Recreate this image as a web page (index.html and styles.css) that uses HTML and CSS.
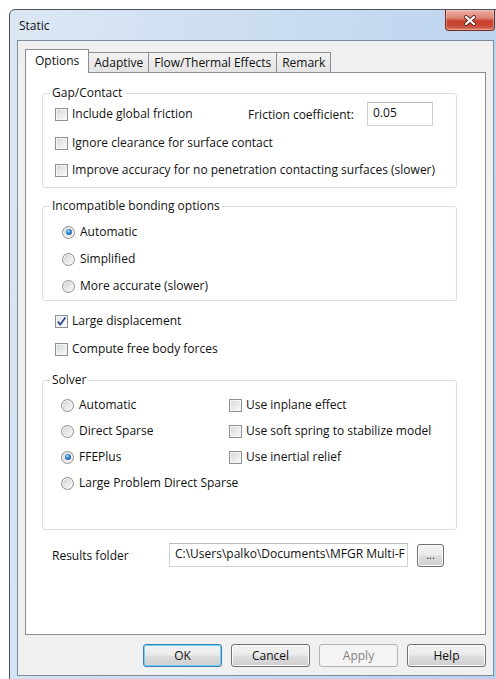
FILE: index.html
```html
<!DOCTYPE html>
<html lang="en">
<head>
<meta charset="utf-8">
<title>Static</title>
<link rel="stylesheet" href="styles.css">
</head>
<body>
<div class="window">
  <div class="titlebar">
    <span class="title">Static</span>
    <button class="close" type="button" aria-label="Close">
      <svg width="14" height="11" viewBox="0 0 14 11">
        <path d="M3 2 L11 9 M11 2 L3 9" stroke="#5b2a22" stroke-width="4" stroke-linecap="round" fill="none"/>
        <path d="M3 2 L11 9 M11 2 L3 9" stroke="#ffffff" stroke-width="2.2" stroke-linecap="round" fill="none"/>
      </svg>
    </button>
  </div>

  <div class="client">
    <div class="tabs">
      <div class="tab active">Options</div>
      <div class="tab">Adaptive</div>
      <div class="tab">Flow/Thermal Effects</div>
      <div class="tab">Remark</div>
    </div>

    <div class="page">
      <fieldset class="group group-gap">
        <legend>Gap/Contact</legend>
        <div class="row row-friction">
          <label class="check check-friction"><span class="box"></span>Include global friction</label>
          <span class="coef-label">Friction coefficient:</span>
          <span class="field coef">0.05</span>
        </div>
        <div class="row">
          <label class="check"><span class="box"></span>Ignore clearance for surface contact</label>
        </div>
        <div class="row">
          <label class="check"><span class="box"></span>Improve accuracy for no penetration contacting surfaces (slower)</label>
        </div>
      </fieldset>

      <fieldset class="group group-bond">
        <legend>Incompatible bonding options</legend>
        <div class="row"><label class="radio"><span class="dot on"></span>Automatic</label></div>
        <div class="row"><label class="radio"><span class="dot"></span>Simplified</label></div>
        <div class="row"><label class="radio"><span class="dot"></span>More accurate (slower)</label></div>
      </fieldset>

      <div class="loose">
        <div class="row">
          <label class="check"><span class="box on">
            <svg width="11" height="11" viewBox="0 0 11 11"><path d="M1.8 5.6 L4.3 8.6 L9.4 1.6" stroke="#2b4189" stroke-width="1.7" fill="none" stroke-linejoin="round"/></svg>
          </span>Large displacement</label>
        </div>
        <div class="row">
          <label class="check"><span class="box"></span>Compute free body forces</label>
        </div>
      </div>

      <fieldset class="group group-solver">
        <legend>Solver</legend>
        <div class="solver-grid">
          <label class="radio"><span class="dot"></span>Automatic</label>
          <label class="check"><span class="box"></span>Use inplane effect</label>
          <label class="radio"><span class="dot"></span>Direct Sparse</label>
          <label class="check"><span class="box"></span>Use soft spring to stabilize model</label>
          <label class="radio"><span class="dot on"></span>FFEPlus</label>
          <label class="check"><span class="box"></span>Use inertial relief</label>
          <label class="radio"><span class="dot"></span>Large Problem Direct Sparse</label>
        </div>
      </fieldset>

      <div class="results">
        <span class="results-label">Results folder</span>
        <span class="field path">C:\Users\palko\Documents\MFGR Multi-F</span>
        <button class="btn browse" type="button">...</button>
      </div>
    </div>

    <div class="actions">
      <button class="btn default" type="button">OK</button>
      <button class="btn" type="button">Cancel</button>
      <button class="btn" type="button" disabled>Apply</button>
      <button class="btn" type="button">Help</button>
    </div>
  </div>
</div>
</body>
</html>
```

FILE: styles.css
```css
* {
  box-sizing: border-box;
}

html,
body {
  margin: 0;
  padding: 0;
  background: #ffffff;
  overflow: hidden;
  height: 679px;
}

body {
  font-family: "Open Sans", "Noto Sans", "Liberation Sans", sans-serif;
  font-size: 12px;
  color: #111111;
}

/* ---- window frame ---- */
.window {
  margin: 9px 0 0 9px;
  width: 493px;
  border: 1px solid #4b5562;
  border-radius: 6px 6px 0 0;
  padding: 0 7px 7px 7px;
  background: linear-gradient(100deg, #dce7f3 0%, #cadcf1 45%, #b7d1ef 100%);
}

.titlebar {
  height: 30px;
  display: flex;
  align-items: flex-start;
  justify-content: space-between;
}

.title {
  margin: 8px 0 0 2px;
  line-height: 16px;
  color: #111111;
}

.close {
  width: 50px;
  height: 21px;
  margin: 0 -1px 0 0;
  padding: 0;
  border: 1px solid #7a2a1f;
  border-top: none;
  border-radius: 0 0 4px 4px;
  background: linear-gradient(#eab1a6 0%, #de8474 40%, #c8412d 55%, #c84a36 80%, #d9806f 100%);
  box-shadow: inset 0 0 0 1px rgba(255, 210, 200, 0.45);
  display: flex;
  align-items: center;
  justify-content: center;
}

/* ---- client area ---- */
.client {
  border: 1px solid #7f8c9b;
  background: #f0f0f0;
  padding: 8px 7px 8px 7px;
  display: flex;
  flex-direction: column;
}

.tabs {
  height: 23px;
  display: flex;
  align-items: flex-end;
}

.tab {
  height: 20px;
  padding: 0 5px;
  border: 1px solid #898c95;
  border-bottom: none;
  border-left: none;
  background: linear-gradient(#f3f3f3, #e3e3e3);
  line-height: 19px;
  white-space: nowrap;
}

.tab.active {
  position: relative;
  z-index: 1;
  height: 24px;
  margin-bottom: -1px;
  padding: 0 9px;
  border-left: 1px solid #898c95;
  background: #ffffff;
  line-height: 22px;
}

.page {
  height: 563px;
  border: 1px solid #898c95;
  background: #ffffff;
  display: flex;
  flex-direction: column;
  align-items: flex-start;
}

/* ---- group boxes ---- */
.group {
  margin: 0 0 0 16px;
  width: 415px;
  border: 1px solid #d5dfe5;
  border-radius: 3px;
  padding: 0;
  min-width: 0;
}

.group legend {
  margin-left: 7px;
  padding: 0 2px;
  line-height: 16px;
}

.group-gap {
  margin-top: 12px;
  padding: 1px 0 7px 0;
  display: flex;
  flex-direction: column;
  gap: 7px;
}

.group-gap > .row {
  margin-left: 12px;
}

.group-bond {
  margin-top: 10px;
  padding: 8px 0 4px 0;
  display: flex;
  flex-direction: column;
  gap: 7px;
}

.group-bond > .row {
  margin-left: 19px;
}

.group-solver {
  margin-top: 13px;
  padding: 4px 0 33px 0;
}

.row {
  height: 20px;
  display: flex;
  align-items: center;
}

.row-friction {
  height: 24px;
}

.check,
.radio {
  display: flex;
  align-items: center;
  white-space: nowrap;
  line-height: 16px;
}

.check {
  gap: 4px;
}

.radio {
  gap: 5px;
}

.check-friction {
  width: 193px;
}

.coef-label {
  width: 119px;
  white-space: nowrap;
}

/* checkbox */
.box {
  width: 13px;
  height: 13px;
  flex: none;
  border: 1px solid #8e8f8f;
  background: linear-gradient(135deg, #d3d4d6 0%, #e9eaeb 55%, #fbfbfb 100%);
  box-shadow: inset 0 0 0 1px #f5f5f5;
  display: flex;
  align-items: center;
  justify-content: center;
}

.box.on {
  background: linear-gradient(135deg, #e2e3e5 0%, #f2f2f3 55%, #fdfdfd 100%);
}

/* radio button */
.dot {
  width: 13px;
  height: 13px;
  flex: none;
  border: 1px solid #8e8f8f;
  border-radius: 50%;
  background: linear-gradient(135deg, #cfd0d2 0%, #e8e8e9 55%, #fbfbfb 100%);
  box-shadow: inset 0 0 0 1px #f3f3f3;
  display: flex;
  align-items: center;
  justify-content: center;
}

.dot.on::after {
  content: "";
  width: 6px;
  height: 6px;
  border-radius: 50%;
  background: radial-gradient(circle at 40% 35%, #a9dcff 0%, #2a7cc4 45%, #0f4580 100%);
}

/* free-standing options */
.loose {
  margin: 10px 0 0 29px;
  display: flex;
  flex-direction: column;
  gap: 8px;
}

/* solver grid */
.solver-grid {
  margin-left: 18px;
  display: grid;
  grid-template-columns: 168px auto;
  grid-auto-rows: 26px;
  align-items: center;
}

/* text fields */
.field {
  display: block;
  height: 24px;
  border: 1px solid #cdd1d7;
  border-top-color: #b7bcc4;
  background: #ffffff;
  padding: 0 5px;
  line-height: 20px;
  white-space: nowrap;
  overflow: hidden;
}

.coef {
  width: 66px;
}

/* results folder */
.results {
  margin: 13px 0 0 26px;
  height: 24px;
  display: flex;
  align-items: center;
}

.results-label {
  width: 117px;
}

.path {
  width: 239px;
}

/* push buttons */
.btn {
  height: 23px;
  padding: 0;
  border: 1px solid #707070;
  border-radius: 3px;
  background: linear-gradient(#f2f2f2 0%, #ebebeb 48%, #dddddd 52%, #cfcfcf 100%);
  box-shadow: inset 0 0 0 1px #fbfbfb;
  font-family: inherit;
  font-size: 12px;
  color: #111111;
  line-height: 20px;
}

.browse {
  width: 27px;
  height: 23px;
  margin-left: 9px;
  line-height: 14px;
  font-size: 11px;
}

.actions {
  margin-top: 9px;
  display: flex;
  justify-content: flex-end;
  gap: 9px;
  padding-right: 0;
}

.actions .btn {
  width: 79px;
}

.btn.default {
  border-color: #3c7fb1;
  box-shadow: inset 0 0 0 1px #6fd0f5;
}

.btn:disabled {
  border-color: #adb2b5;
  background: #f4f4f4;
  box-shadow: none;
  color: #838383;
}
```
